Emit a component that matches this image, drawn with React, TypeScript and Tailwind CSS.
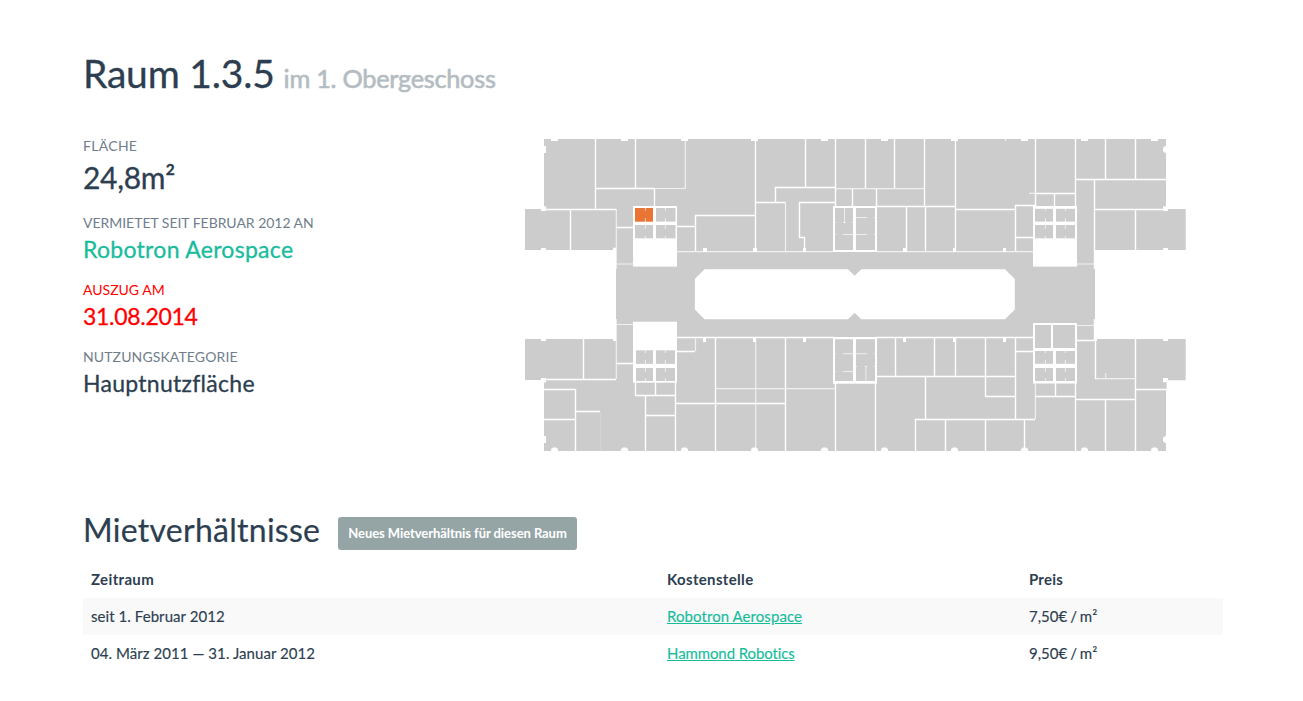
import type { ReactNode } from 'react';

type Box = [x: number, y: number, w: number, h: number];

const OUTLINE =
  'M544 139H1166V209H1185.7V250H1094.5V269H1095V319H1094.3V339H1185.7V380.3H1166.6V389H1166V451H544V380H525V339H616V250H525V209H544Z';
const COURTYARD =
  'M704.5 269.2H848L854.7 275.8L861.3 269.2H1005L1014.8 279V309.5L1005 319.2H861.3L854.7 312.8L848 319.2H704.5L694.9 309.5V279Z';

// Vertical walls as [x, y1, y2]
const V: [number, number, number][] = [
  [595, 139, 209], [635, 139, 188], [654, 188, 206], [755, 139, 250], [570, 209, 250], [695, 215, 251],
  [805, 139, 187], [775, 187, 202], [799, 202, 238], [804, 237, 249], [835, 139, 206], [865, 139, 188],
  [894, 139, 188], [924, 139, 206], [852, 189, 206], [876, 189, 206], [906, 206, 251], [925, 206, 251],
  [955, 139, 251], [1035, 139, 206], [1075, 139, 206], [1054, 193, 206], [1105, 139, 179], [1135, 139, 179],
  [1094, 180, 269], [1135, 209, 250], [1015, 205, 251],
  [583, 339, 379], [635, 382, 395], [655, 382, 395], [675, 382, 451], [645, 395, 451], [575, 389, 451],
  [715, 337, 451], [785, 337, 451], [835, 383, 451], [875, 383, 451], [895, 338, 376], [934, 338, 376],
  [955, 338, 376], [925, 376, 419], [915, 419, 451], [945, 419, 451], [985, 338, 396], [1015, 337, 419],
  [985, 419, 451], [1024, 419, 448], [1055, 383, 396], [1075, 383, 451], [1105, 399, 451], [1135, 339, 451],
  [1095, 341, 379], [1094, 319, 340],
];

// Horizontal walls as [y, x1, x2]
const H: [number, number, number][] = [
  [188, 595, 655], [209, 544, 616], [227, 616, 633], [226, 677, 695], [215, 695, 755], [187, 775, 835],
  [202, 755, 785], [202, 799, 835], [237, 799, 805], [206, 876, 955], [209, 955, 1015], [193, 1035, 1075],
  [179, 1075, 1166], [209, 1094, 1166], [205, 1015, 1035], [237, 1015, 1033],
  [379, 544, 616], [363, 616, 633], [395, 635, 675], [415, 645, 675], [389, 544, 575], [419, 544, 575],
  [411, 575, 600], [337, 677, 834], [337, 876, 1033], [351, 677, 695], [403, 675, 785], [376, 877, 1015],
  [419, 915, 1035], [396, 985, 1015], [351, 1015, 1033], [396, 1035, 1075], [399, 1075, 1135],
  [389, 1135, 1166], [340, 1077, 1096],
];

const THIN =
  'M685.3 139V188.5M654 188.5H686M616.3 209V269M616 264H633M677 251.7H833M877 251.7H1033M785.5 202V251M835 188.7H925' +
  'M1005.5 139V141M1029 193.3H1035M1077 264H1094M616.3 319V379M616 324.5H633M695.5 337V351M755.7 339V448M715 388.7H835' +
  'M1035.4 383V419M1095 378.7H1135M1105.7 373V378M1077 325.5H1094';

const CORES: Box[] = [
  [633, 206, 44, 60.6], [833, 206, 44, 46], [1033, 206, 44, 60.6],
  [633, 321.7, 44, 61], [833, 337, 44, 46.7], [1033, 323, 44, 60.5],
];

const CELLS: Box[] = [
  [656, 208, 19.5, 13.6], [635, 225, 18, 13.3], [656, 225, 19.5, 13.3],
  [835, 208, 18, 42], [856, 208, 19, 42],
  [1035, 208.8, 18, 12.8], [1056, 208.8, 19, 12.8], [1035, 225, 18, 13.3], [1056, 225, 19, 13.3],
  [636, 350.3, 17, 13.6], [656, 350.3, 19, 13.6], [636, 368, 17, 13], [656, 368, 19, 13],
  [835, 339.2, 18, 41.8], [856, 339.2, 19, 41.8],
  [1035, 325, 16, 23], [1053, 325, 22, 23],
  [1035, 351, 18, 12.8], [1056, 351, 19, 12.8], [1035, 368, 18, 13], [1056, 368, 19, 13],
];

const STALLS =
  'M645.4 208V210.7M645.4 218V222M645.4 225V229M645.4 236V238.3M665.4 208V210.7M665.4 218V222M665.4 225V229M665.4 236V238.3' +
  'M1045.4 208V210.7M1045.4 218V222M1045.4 225V229M1045.4 236V238.3M1065.4 208V210.7M1065.4 218V222M1065.4 225V229M1065.4 236V238.3' +
  'M645.4 350V353M645.4 360V364M645.4 368V372M645.4 378V381M665.4 350V353M665.4 360V364M665.4 368V372M665.4 378V381' +
  'M1045.4 350V353M1045.4 360V364M1045.4 368V372M1045.4 378V381M1065.4 350V353M1065.4 360V364M1065.4 368V372M1065.4 378V381' +
  'M844.5 208V222.5M843 222.5H846M835 222.5H836M852 222.5H853M835 234.5H836M843 234.5H867M874 234.5H875M856 217.5H867M874 217.5H875' +
  'M835 353.7H836M843 353.7H867M874 353.7H875M835 371.5H836M843 371.5H853M856 366.5H857M865 366.5H867M874 366.5H875M865.9 366V381';

const COLUMNS: Box[] = [
  [703, 248, 4, 4], [753, 248, 4, 4], [803, 248, 3, 4], [903, 248, 4, 4], [953, 248, 3, 4], [1003, 248, 3, 4],
  [703, 338, 3, 4], [753, 338, 3, 4], [803, 338, 3, 4], [903, 338, 3, 4], [953, 338, 3, 4], [1003, 338, 3, 4],
  [544, 146, 2, 7], [544, 436, 2, 7],
  [541, 206.3, 5, 4.7], [541, 248, 5, 3], [613, 247.7, 3, 3],
  [1163, 206.3, 5, 4.7], [1163, 248, 5, 3],
  [541, 338, 5, 3], [613, 338, 3, 3], [541, 378, 5, 4.5], [1163, 338, 5, 3], [1163, 378, 5, 4.2],
  [1094, 338, 3, 3],
];

const PILLARS = [551, 621, 681, 751, 821, 881, 951, 1021, 1081, 1151];

function rects(list: Box[]) {
  return list.map(([x, y, width, height]) => <rect key={`${x}-${y}`} x={x} y={y} width={width} height={height} />);
}

function FloorPlan() {
  return (
    <svg viewBox="520 130 680 330" width="680" height="330" className="block shrink-0" role="img">
      <path d={OUTLINE} fill="#ccc" />
      <path d={COURTYARD} fill="#fff" />
      <g stroke="#fff" fill="none">
        <path
          strokeWidth="1.4"
          d={V.map(([x, a, b]) => `M${x + 0.5} ${a}V${b}`).join('') + H.map(([y, a, b]) => `M${a} ${y + 0.5}H${b}`).join('')}
        />
        <path strokeWidth="1.2" strokeOpacity="0.7" d={THIN} />
        <path strokeWidth="1" strokeOpacity="0.15" d="M600.5 412V451" />
      </g>
      <g fill="#fff">
        {rects(CORES)}
        {rects(COLUMNS)}
        {PILLARS.map((x) => (
          <path key={x} d={`M${x} 138H${x + 7}V141H${x}ZM${x} 452V449L${x + 2} 447.6H${x + 5}L${x + 7} 449V452Z`} />
        ))}
        <path d="M1167 146H1165L1163 148V151L1165 153H1167ZM1167 436H1165L1163 438V441L1165 443H1167Z" />
      </g>
      <g fill="#ccc">{rects(CELLS)}</g>
      <rect x="635" y="208" width="18" height="13.7" fill="#ea7434" />
      <path d={STALLS} stroke="#fff" strokeOpacity="0.65" fill="none" />
    </svg>
  );
}

function Fact({ label, children, labelStyle, value }: { label: string; children: ReactNode; labelStyle: string; value: string }) {
  return (
    <div>
      <dt className={`text-[14px] leading-[20px] uppercase ${labelStyle}`}>{label}</dt>
      <dd className={`[-webkit-text-stroke:0.3px] ${value}`}>{children}</dd>
    </div>
  );
}

const leases = [
  { period: 'seit 1. Februar 2012', tenant: 'Robotron Aerospace', price: '7,50€ / m²', tracking: 'tracking-[0.07px]' },
  { period: '04. März 2011 — 31. Januar 2012', tenant: 'Hammond Robotics', price: '9,50€ / m²', tracking: 'tracking-[-0.1px]' },
];

export default function App() {
  return (
    <main className="h-[701px] w-[1303px] overflow-hidden bg-white pl-[83px] pr-20 pt-[52px] font-['Lato',sans-serif] text-[15px] text-[#2c3e50] [font-variant-ligatures:none]">
      <h1 className="h-[43px] text-[39px] leading-[43px] tracking-[-0.2px] [-webkit-text-stroke:0.3px]">
        Raum 1.3.5<small className="ml-[9px] text-[25.35px] leading-none tracking-[-0.28px] text-[#b4bcc2] [-webkit-text-stroke:0.6px]">im 1. Obergeschoss</small>
      </h1>
      <div className="mt-[35px] flex h-[330px]">
        <dl className="flex w-[437px] flex-col pt-[6px]">
          <Fact label="Fläche" labelStyle="text-[#6f7d8c] tracking-[0.3px]" value="h-[57px] text-[30px] leading-[43px] tracking-[-0.3px]">24,8m²</Fact>
          <Fact label="Vermietet seit Februar 2012 an" labelStyle="text-[#6f7d8c] tracking-[-0.03px]" value="h-[47px] text-[23px] leading-[33px] tracking-[0.29px] text-[#18bc9c]">
            Robotron Aerospace
          </Fact>
          <Fact label="Auszug am" labelStyle="text-[#ff0000]" value="h-[47px] text-[23px] leading-[33px] tracking-[-0.3px] text-[#ff0000]">31.08.2014</Fact>
          <Fact label="Nutzungskategorie" labelStyle="text-[#6f7d8c] tracking-[0.12px]" value="h-[47px] text-[23px] leading-[33px] tracking-[0.28px]">Hauptnutzfläche</Fact>
        </dl>
        <FloorPlan />
      </div>
      <div className="mt-[51px] flex h-[38px]">
        <h2 className="w-[255px] text-[32px] leading-[38px] tracking-[0.27px] [-webkit-text-stroke:0.2px]">Mietverhältnisse</h2>
        <button className="mt-[6px] h-[33px] w-[239px] shrink-0 whitespace-nowrap rounded-[3px] bg-[#95a5a6] text-[13px] font-bold tracking-[-0.06px] text-white">
          Neues Mietverhältnis für diesen Raum
        </button>
      </div>
      <table className="mt-[12px] w-[1140px] table-fixed border-collapse text-left">
        <thead>
          <tr className="h-[37px]">
            <th className="w-[576px] px-2 font-bold tracking-[0.35px]">Zeitraum</th>
            <th className="w-[362px] px-2 font-bold tracking-[0.33px]">Kostenstelle</th>
            <th className="px-2 font-bold tracking-[0.2px]">Preis</th>
          </tr>
        </thead>
        <tbody>
          {leases.map((lease) => (
            <tr key={lease.tenant} className="h-[37px] [-webkit-text-stroke:0.15px] odd:bg-[#f9f9f9]">
              <td className="px-2 tracking-[0.06px]">{lease.period}</td>
              <td className="px-2">
                <a href="#" className={`text-[#18bc9c] underline ${lease.tracking}`}>{lease.tenant}</a>
              </td>
              <td className="px-2 [word-spacing:-0.9px]">{lease.price}</td>
            </tr>
          ))}
        </tbody>
      </table>
    </main>
  );
}
